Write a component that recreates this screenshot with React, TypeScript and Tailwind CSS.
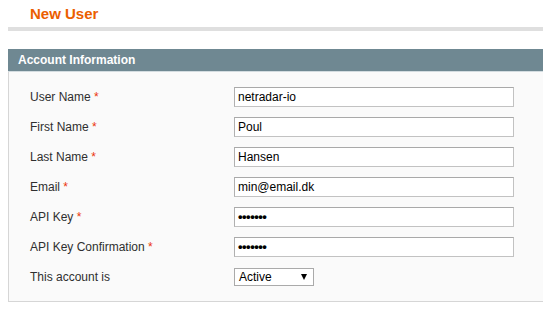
import React from "react";

const rows: { label: string; required: boolean; value: string; pw?: boolean }[] = [
  { label: "User Name", required: true, value: "netradar-io" },
  { label: "First Name", required: true, value: "Poul" },
  { label: "Last Name", required: true, value: "Hansen" },
  { label: "Email", required: true, value: "min@email.dk" },
  { label: "API Key", required: true, value: "•••••••", pw: true },
  { label: "API Key Confirmation", required: true, value: "•••••••", pw: true },
];

export default function App() {
  return (
    <div
      className="w-[543px] h-[310px] bg-white overflow-hidden"
      style={{ fontFamily: '"Liberation Sans", Arial, sans-serif' }}
    >
      <div className="h-[27px] pl-[30px] pt-[5px] text-[15px] leading-[18px] font-bold text-[#eb5e00]">
        New User
      </div>
      <div className="ml-[8px] h-[4px] bg-[#dfdfdf]" />
      <div className="h-[18px]" />
      <div className="ml-[8px] w-[560px]">
        <div className="h-[22px] bg-[#6f8892] pl-[10px] flex items-center text-[12px] font-bold text-white">
          Account Information
        </div>
        <div className="h-[1px] bg-[#d3dce0]" />
        <div className="bg-[#fafafa] border-l border-b border-[#d6d6d6] pl-[21px] pt-[15px] pb-[14px] flex flex-col gap-[10px]">
          {rows.map((r) => (
            <div key={r.label} className="flex items-center h-[20px]">
              <div className="w-[204px] text-[12px] text-[#2f2f2f]">
                {r.label}
                {r.required && <span className="text-[#eb340a]"> *</span>}
              </div>
              <div className="w-[280px] h-[20px] bg-white border border-[#c2c2c2] border-t-[#a9a9a9] border-l-[#b0b0b0] flex items-center pl-[3px] text-[12px] text-black">
                <span className={r.pw ? "text-[13px] font-bold tracking-[-0.5px]" : ""}>{r.value}</span>
              </div>
            </div>
          ))}
          <div className="flex items-center h-[20px]">
            <div className="w-[204px] text-[12px] text-[#2f2f2f]">This account is</div>
            <div className="w-[80px] h-[18px] bg-white border border-[#aaaaaa] flex items-center justify-between pl-[4px] pr-[6px] text-[12px] text-black">
              <span>Active</span>
              <svg width="6" height="6" viewBox="0 0 6 6">
                <polygon points="0,0 6,0 3,6" fill="#000" />
              </svg>
            </div>
          </div>
        </div>
      </div>
    </div>
  );
}
